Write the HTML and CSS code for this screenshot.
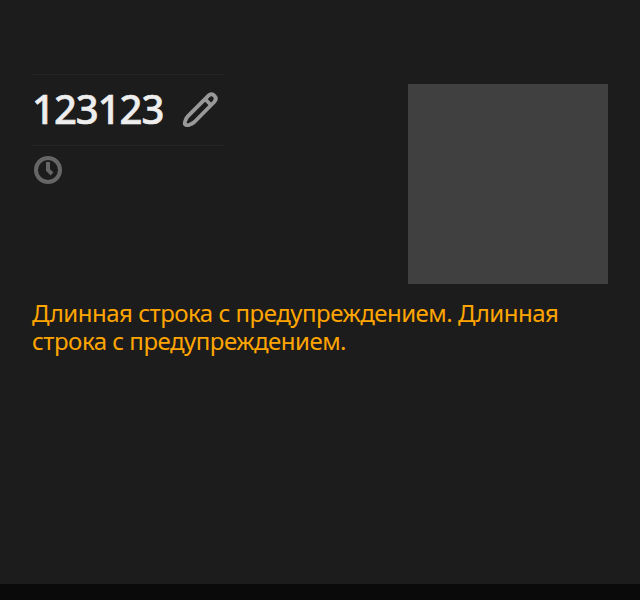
FILE: index.html
```html
<!DOCTYPE html>
<html lang="ru">
<head>
<meta charset="utf-8">
<title>123123</title>
<link rel="stylesheet" href="styles.css">
</head>
<body>
<main class="card">
  <header class="header">
    <div class="info">
      <div class="title">
        <span class="name">123123</span>
        <svg class="edit" viewBox="0 0 40 40" fill="none" stroke="#999" stroke-width="3.8" stroke-linejoin="round">
          <path d="M5.1 34.4Q4.1 33.4 5.6 30Q6.5 27.5 8.2 25.8L28.2 5.8Q31.6 2.9 34.5 5.8Q37.2 8.7 34.2 12L14.4 32Q12.4 33.8 9.4 34.8Q6.2 35.6 5.1 34.4Z"/>
          <path d="M25 9L31 15"/>
        </svg>
      </div>
      <svg class="clock" viewBox="0 0 28 28" fill="none" stroke="#666" stroke-width="4">
        <circle cx="14" cy="14" r="12"/>
        <path d="M14 6V14L18 18"/>
      </svg>
    </div>
    <div class="picture"></div>
  </header>
  <p class="warning">Длинная строка с предупреждением. Длинная строка с предупреждением.</p>
</main>
</body>
</html>
```
FILE: styles.css
```css
* { box-sizing: border-box; }
body {
  margin: 0;
  background: #0a0a0a;
  font-family: "Noto Sans", sans-serif;
}
.card {
  height: 584px;
  padding: 74px 32px 0;
  background: #1c1c1c;
}
.header {
  display: flex;
  justify-content: space-between;
  height: 210px;
}
.info { width: 192px; }
.title {
  display: flex;
  align-items: center;
  justify-content: space-between;
  height: 72px;
  padding-right: 4px;
  border-top: 1px solid #252525;
  border-bottom: 1px solid #252525;
}
.name {
  padding-bottom: 2px;
  color: #eee;
  font-size: 40px;
  font-weight: 500;
  line-height: 48px;
  letter-spacing: -1px;
  white-space: nowrap;
  -webkit-text-stroke: 0.6px #eee;
}
.edit {
  flex: none;
  width: 40px;
  height: 40px;
}
.clock {
  display: block;
  width: 28px;
  height: 28px;
  margin: 10px 0 0 2px;
}
.picture {
  width: 200px;
  height: 200px;
  margin-top: 10px;
  background: #404040;
}
.warning {
  margin: 15px 0 0;
  color: #ffa500;
  font-size: 24px;
  line-height: 28px;
  letter-spacing: -0.49px;
}
```
